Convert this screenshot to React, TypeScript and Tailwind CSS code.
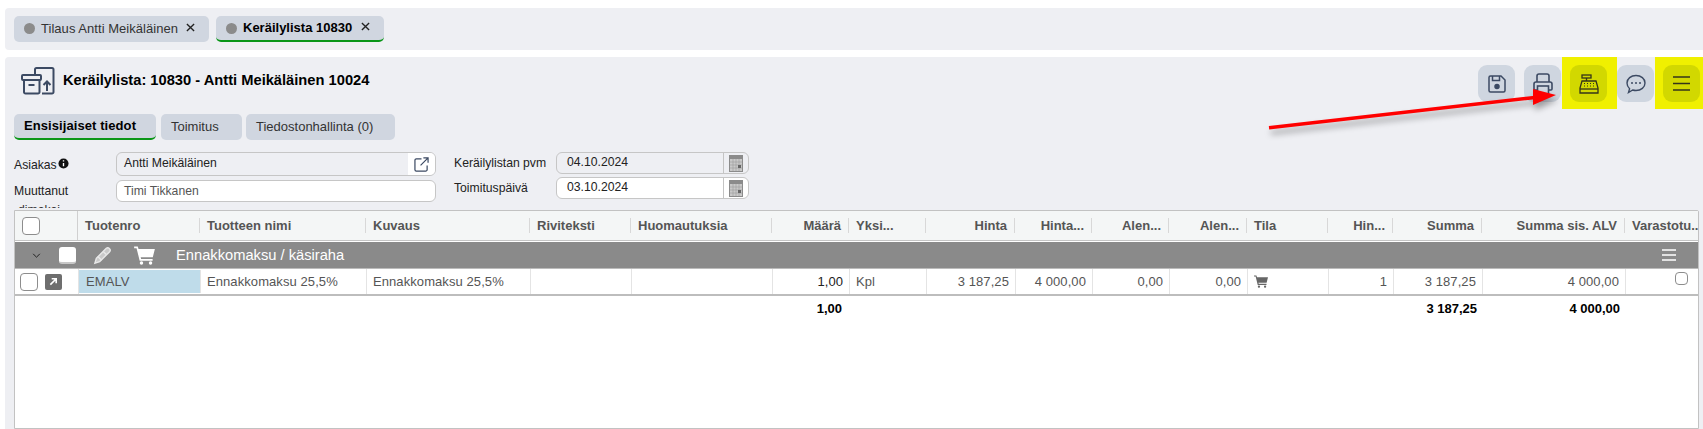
import React from "react";

const cols = "grid-cols-[63px_122px_166px_164px_101px_141px_77px_77px_89px_77px_77px_78px_81px_65px_89px_143px_1fr]";

const headers: [string, boolean][] = [
  ["", false], ["Tuotenro", false], ["Tuotteen nimi", false], ["Kuvaus", false], ["Riviteksti", false], ["Huomautuksia", false],
  ["Määrä", true], ["Yksi...", false], ["Hinta", true], ["Hinta...", true], ["Alen...", true], ["Alen...", true], ["Tila", false],
  ["Hin...", true], ["Summa", true], ["Summa sis. ALV", true], ["Varastotu..", false],
];

const Cart = ({ className }: { className: string }) => (
  <svg viewBox="0 0 24 22" className={className} fill="currentColor">
    <path d="M0 0.5h4.2l.9 3H24l-2.4 9.5H7.6l.5 2H21.4v2H6.4L2.8 2.5H0z" />
    <circle cx="8.5" cy="19.8" r="2" />
    <circle cx="19" cy="19.8" r="2" />
  </svg>
);

const Box = ({ className }: { className: string }) => (
  <div className={"border border-[#8d8d8d] rounded-[4px] bg-white " + className} />
);

const CalendarIcon = () => (
  <div className="w-[25px] flex items-center justify-center border-l border-[#c4c4c4] shrink-0">
    <svg viewBox="0 0 14 17" className="w-[14px] h-[17px]">
      <rect width="14" height="17" fill="#8b8b8b" />
      <rect x="1" y="4" width="12" height="12" fill="#c9c9c9" />
      <path d="M1 7h12M1 10h12M1 13h12M4 4v12M7 4v12M10 4v12" stroke="#a0a0a0" strokeWidth="0.7" />
      <rect x="9" y="10" width="3" height="3" fill="#666" />
    </svg>
  </div>
);

const ToolBtn = ({ on, children }: { on?: boolean; children: React.ReactNode }) => (
  <div className={"w-[37px] h-[37px] rounded-[9px] flex items-center justify-center " + (on ? "bg-[#d2d800]" : "bg-[#cfd6e0]")}>
    {children}
  </div>
);

const cellL = "flex items-center pl-[6px] border-r border-[#e4e4e4] whitespace-nowrap";
const cellR = "flex items-center justify-end pr-[6px] border-r border-[#e4e4e4] whitespace-nowrap";

export default function App() {
  return (
    <div className="relative w-[1703px] h-[429px] overflow-hidden bg-white pt-[8px] pl-[5px] font-['Liberation_Sans',Arial,sans-serif] text-[13px] text-[#222]">
      {/* Top tabs */}
      <div className="h-[42px] bg-[#eeeff3] rounded-l-[4px] flex items-center gap-[7px] pl-[9px]">
        <div className="w-[195px] h-[26px] bg-[#d0d6e0] rounded-[5px] flex items-center pl-[10px] text-[#333]">
          <span className="w-[11px] h-[11px] rounded-full bg-[#8b8b8b] mr-[6px] -mt-[1px]" />
          <span className="whitespace-nowrap tracking-[0.04px]">Tilaus Antti Meikäläinen</span>
          <svg viewBox="0 0 10 10" className="w-[9px] h-[9px] ml-[8px] -mt-[4px]" stroke="#222" strokeWidth="1.5"><path d="M1 1l8 8M9 1l-8 8" /></svg>
        </div>
        <div className="w-[168px] h-[26px] bg-[#d0d6e0] rounded-[5px] border-b-2 border-[#0a9618] flex items-center pl-[10px] text-black">
          <span className="w-[11px] h-[11px] rounded-full bg-[#8b8b8b] mr-[6px]" />
          <span className="font-bold whitespace-nowrap">Keräilylista 10830</span>
          <svg viewBox="0 0 10 10" className="w-[9px] h-[9px] ml-[9px] -mt-[4px]" stroke="#222" strokeWidth="1.5"><path d="M1 1l8 8M9 1l-8 8" /></svg>
        </div>
      </div>

      {/* Main panel */}
      <div className="mt-[7px] h-[372px] bg-[#eeeff3] rounded-tl-[4px] flex flex-col">
        <div className="h-[57px] flex items-start justify-between shrink-0">
          <div className="flex items-center pl-[16px] pt-[10px]">
            <svg viewBox="0 0 34 28" className="w-[34px] h-[28px]" fill="none" stroke="#3c4a63" strokeWidth="2">
              <path d="M14 7V2.5a1.5 1.5 0 0 1 1.5-1.5H31a1.5 1.5 0 0 1 1.5 1.5V25a1.500 1.500 0 0 1-1.500 1.500H21" />
              <rect x="1" y="8" width="19" height="5" rx="1" />
              <path d="M3 13v12a1.500 1.500 0 0 0 1.500 1.500H17a1.500 1.500 0 0 0 1.500-1.500V13M7.500 18h6" />
              <path d="M26 24v-9M22.500 18l3.500-3.500 3.500 3.500" />
            </svg>
            <span className="ml-[8px] text-[14.7px] font-bold text-black -mt-[1px] whitespace-nowrap">Keräilylista: 10830 - Antti Meikäläinen 10024</span>
          </div>
          <div className="flex gap-[9px] pt-[8px] pr-[3px]">
            <ToolBtn>
              <svg viewBox="0 0 18 18" className="w-[18px] h-[18px]" fill="none" stroke="#3c4a63" strokeWidth="1.5">
                <path d="M1 2.500A1.500 1.500 0 0 1 2.500 1H13l4 4v10.500a1.500 1.500 0 0 1-1.500 1.500h-13A1.500 1.500 0 0 1 1 15.500z" />
                <path d="M4.500 1v4.500h7V1" />
                <circle cx="9" cy="11.500" r="2" fill="#3c4a63" />
              </svg>
            </ToolBtn>
            <ToolBtn>
              <svg viewBox="0 0 20 22" className="w-[20px] h-[22px]" fill="none" stroke="#3c4a63" strokeWidth="1.6">
                <path d="M4 9V3a2 2 0 0 1 2-2h8a2 2 0 0 1 2 2v6" />
                <path d="M4 17H2a1 1 0 0 1-1-1v-5a2 2 0 0 1 2-2h14a2 2 0 0 1 2 2v5a1 1 0 0 1-1 1h-2" />
                <rect x="4.500" y="13" width="11" height="8" />
              </svg>
            </ToolBtn>
            <div className="relative">
              <div className="absolute -left-[8px] -top-[8px] w-[55px] h-[52px] bg-[#f0f000]" />
              <div className="relative">
                <ToolBtn on>
                  <svg viewBox="0 0 20 20" className="w-[20px] h-[20px]" fill="none" stroke="#34341a" strokeWidth="1.3">
                    <rect x="3" y="1" width="9" height="3" />
                    <path d="M7.500 4v3" />
                    <path d="M3 7h14l2 7v5H1v-5z" />
                    <path d="M1 15h18" />
                    <path d="M5 9.500h1M8 9.500h1M11 9.500h1M14 9.500h1M5 12h1M8 12h1M11 12h1M14 12h1" strokeWidth="1.200" />
                  </svg>
                </ToolBtn>
              </div>
            </div>
            <div className="ml-[1px]">
              <ToolBtn>
                <svg viewBox="0 0 20 20" className="w-[20px] h-[20px]" fill="none" stroke="#3c4a63" strokeWidth="1.400">
                  <path d="M10 1.500c5 0 9 3.200 9 7.500s-4 7.500-9 7.500c-1.200 0-2.300-.2-3.300-.5L2.500 18.500l1.100-3.800C2 13.300 1 11.300 1 9c0-4.300 4-7.500 9-7.500z" />
                  <circle cx="6" cy="9" r="1" fill="#3c4a63" stroke="none" />
                  <circle cx="10" cy="9" r="1" fill="#3c4a63" stroke="none" />
                  <circle cx="14" cy="9" r="1" fill="#3c4a63" stroke="none" />
                </svg>
              </ToolBtn>
            </div>
            <div className="relative">
              <div className="absolute -left-[8px] -top-[8px] w-[48px] h-[52px] bg-[#f0f000]" />
              <div className="relative">
                <ToolBtn on>
                  <svg viewBox="0 0 17 15" className="w-[17px] h-[15px] -mt-[1px]" stroke="#34341a" strokeWidth="1.500"><path d="M0 1h17M0 7.500h17M0 14h17" /></svg>
                </ToolBtn>
              </div>
            </div>
          </div>
        </div>

        {/* Sub tabs */}
        <div className="flex gap-[4px] pl-[9px] h-[26px] shrink-0 text-[#333]">
          <div className="w-[142px] bg-[#d0d6e0] rounded-[5px] border-b-2 border-[#0a9618] flex items-center pl-[10px] font-bold text-black tracking-[0.08px]">Ensisijaiset tiedot</div>
          <div className="w-[81px] ml-[1px] bg-[#d0d6e0] rounded-[5px] flex items-center pl-[10px]">Toimitus</div>
          <div className="w-[149px] bg-[#d0d6e0] rounded-[5px] flex items-center pl-[10px]">Tiedostonhallinta (0)</div>
        </div>

        {/* Form */}
        <div className="flex pl-[9px] pt-[12px] shrink-0 h-[70px] text-[12.2px]">
          <div className="w-[102px]">
            <div className="h-[24px] flex items-center pt-[2px]">
              Asiakas
              <svg viewBox="0 0 12 12" className="w-[11px] h-[11px] ml-[1px] -mt-[4px]"><circle cx="6" cy="6" r="5.500" fill="#111" /><path d="M6 2.500v1.300M6 5.500v3.500" stroke="#fff" strokeWidth="1.500" /></svg>
            </div>
            <div className="h-[22px] mt-[4px] flex items-center">Muuttanut</div>
            <div className="h-[4px] overflow-hidden leading-[13px] mt-[2px] pl-[4px] text-[#333]">dimakaj</div>
          </div>
          <div className="w-[320px]">
            <div className="h-[24px] rounded-[6px] border border-[#c6c6c6] flex items-center pl-[7px] overflow-hidden">
              <span className="flex-1 -mt-[1px]">Antti Meikäläinen</span>
              <div className="w-[27px] h-full bg-white flex items-center justify-center">
                <svg viewBox="0 0 16 16" className="w-[15px] h-[15px]" fill="none" stroke="#3c4a63" strokeWidth="1.300"><path d="M8 2H2.500A1.500 1.500 0 0 0 1 3.500v10A1.500 1.500 0 0 0 2.500 15h10a1.500 1.500 0 0 0 1.500-1.500V9M7 9l8-8M10 1h5v5" /></svg>
              </div>
            </div>
            <div className="h-[22px] mt-[4px] rounded-[6px] border border-[#c6c6c6] bg-white flex items-center pl-[7px] text-[#555]">Timi Tikkanen</div>
          </div>
          <div className="w-[102px] ml-[18px] leading-none">
            <div className="h-[22px] flex items-center">Keräilylistan pvm</div>
            <div className="h-[22px] mt-[3px] flex items-center">Toimituspäivä</div>
          </div>
          <div className="w-[193px]">
            <div className="h-[22px] rounded-[6px] border border-[#c6c6c6] flex overflow-hidden">
              <span className="flex-1 pl-[10px] leading-[18px]">04.10.2024</span>
              <CalendarIcon />
            </div>
            <div className="h-[22px] mt-[3px] rounded-[6px] border border-[#c6c6c6] bg-white flex overflow-hidden">
              <span className="flex-1 pl-[10px] leading-[18px]">03.10.2024</span>
              <CalendarIcon />
            </div>
          </div>
        </div>

        {/* Table */}
        <div className="ml-[9px] mr-[4px] flex-1 border border-[#c2c2c2] rounded-tr-[2px] bg-white flex flex-col min-h-0">
          <div className={"grid h-[30px] bg-[#f4f6f6] border-b border-[#c4c4c4] font-bold text-[#555] items-center shrink-0 " + cols}>
            {headers.map(([t, right], i) =>
              i === 0 ? (
                <div key={i} className="h-full border-r border-[#d0d0d0] flex items-center pl-[7px]">
                  <Box className="w-[18px] h-[18px]" />
                </div>
              ) : (
                <div
                  key={i}
                  className={"h-[15px] leading-[15px] whitespace-nowrap overflow-hidden pl-[7px] " + (i < 16 ? "pr-[7px] border-r border-[#d8d8d8] " : "") + (right ? "text-right" : "text-left")}
                >
                  {t}
                </div>
              )
            )}
          </div>
          <div className="h-[27px] mt-[1px] bg-[#8a8a8a] flex items-center text-white shrink-0 border-b border-[#bbb]">
            <svg viewBox="0 0 10 6" className="w-[9px] h-[5px] ml-[17px]" fill="none" stroke="#222" strokeWidth="1.200"><path d="M1 1l4 4 4-4" /></svg>
            <div className="w-[17px] h-[17px] bg-white border-b-2 border-[#c8c8c8] rounded-[3px] ml-[18px]" />
            <svg viewBox="0 0 20 20" className="w-[19px] h-[19px] ml-[17px]" fill="none" stroke="#e8e8e8" strokeWidth="1.500"><path d="M2 18l1.500-5L14 2.500a2 2 0 0 1 3 0l.5.5a2 2 0 0 1 0 3L7 16.500z" fill="#c9c9c9" /><path d="M5 11l4 4M11 6l3 3" /></svg>
            <Cart className="w-[21px] h-[19px] ml-[22px] text-white" />
            <span className="ml-[21px] text-[14.7px] whitespace-nowrap">Ennakkomaksu / käsiraha</span>
            <svg viewBox="0 0 14 12" className="w-[14px] h-[12px] ml-auto mr-[22px]" stroke="#fff" strokeWidth="1.500"><path d="M0 1h14M0 6h14M0 11h14" /></svg>
          </div>
          <div className={"grid h-[27px] pl-[1px] border-b-2 border-[#bdbdbd] text-[#555] tracking-[0.08px] shrink-0 " + cols}>
            <div className="border-r border-[#e4e4e4] flex items-center pl-[4px] gap-[7px]">
              <Box className="w-[18px] h-[18px]" />
              <div className="w-[17px] h-[16px] bg-[#6e6e6e] rounded-[2px] flex items-center justify-center">
                <svg viewBox="0 0 10 10" className="w-[9px] h-[9px]" fill="none" stroke="#fff" strokeWidth="1.800"><path d="M1.500 8.500l6-6M3 2h5v5" /></svg>
              </div>
            </div>
            <div className="my-[1px] bg-[#bfdcea] flex items-center pl-[7px] border-r border-[#e4e4e4]">EMALV</div>
            <div className={cellL}>Ennakkomaksu 25,5%</div>
            <div className={cellL}>Ennakkomaksu 25,5%</div>
            <div className="border-r border-[#e4e4e4]" />
            <div className="border-r border-[#e4e4e4]" />
            <div className={cellR + " text-[#222]"}>1,00</div>
            <div className={cellL}>Kpl</div>
            <div className={cellR}>3 187,25</div>
            <div className={cellR}>4 000,00</div>
            <div className={cellR}>0,00</div>
            <div className={cellR}>0,00</div>
            <div className={cellL}><Cart className="w-[14px] h-[13px] text-[#666]" /></div>
            <div className={cellR}>1</div>
            <div className={cellR}>3 187,25</div>
            <div className={cellR}>4 000,00</div>
            <div className="flex items-start justify-end pr-[10px] pt-[3px]"><Box className="w-[13px] h-[13px]" /></div>
          </div>
          <div className={"grid h-[26px] items-center font-bold text-black shrink-0 " + cols}>
            <div className="col-start-7 text-right pr-[7px]">1,00</div>
            <div className="col-start-15 text-right pr-[5px]">3 187,25</div>
            <div className="col-start-16 text-right pr-[5px]">4 000,00</div>
          </div>
        </div>
      </div>

      {/* Annotation arrow */}
      <svg className="absolute left-[1260px] top-[85px] w-[310px] h-[55px] pointer-events-none overflow-visible drop-shadow-[2px_5px_3px_rgba(0,0,0,0.35)]" viewBox="0 0 310 55">
        <path d="M9 42.700L275 12.500" stroke="#ff0000" strokeWidth="3.500" />
        <path d="M273 4L296 10 273 20z" fill="#ff0000" />
      </svg>
    </div>
  );
}
